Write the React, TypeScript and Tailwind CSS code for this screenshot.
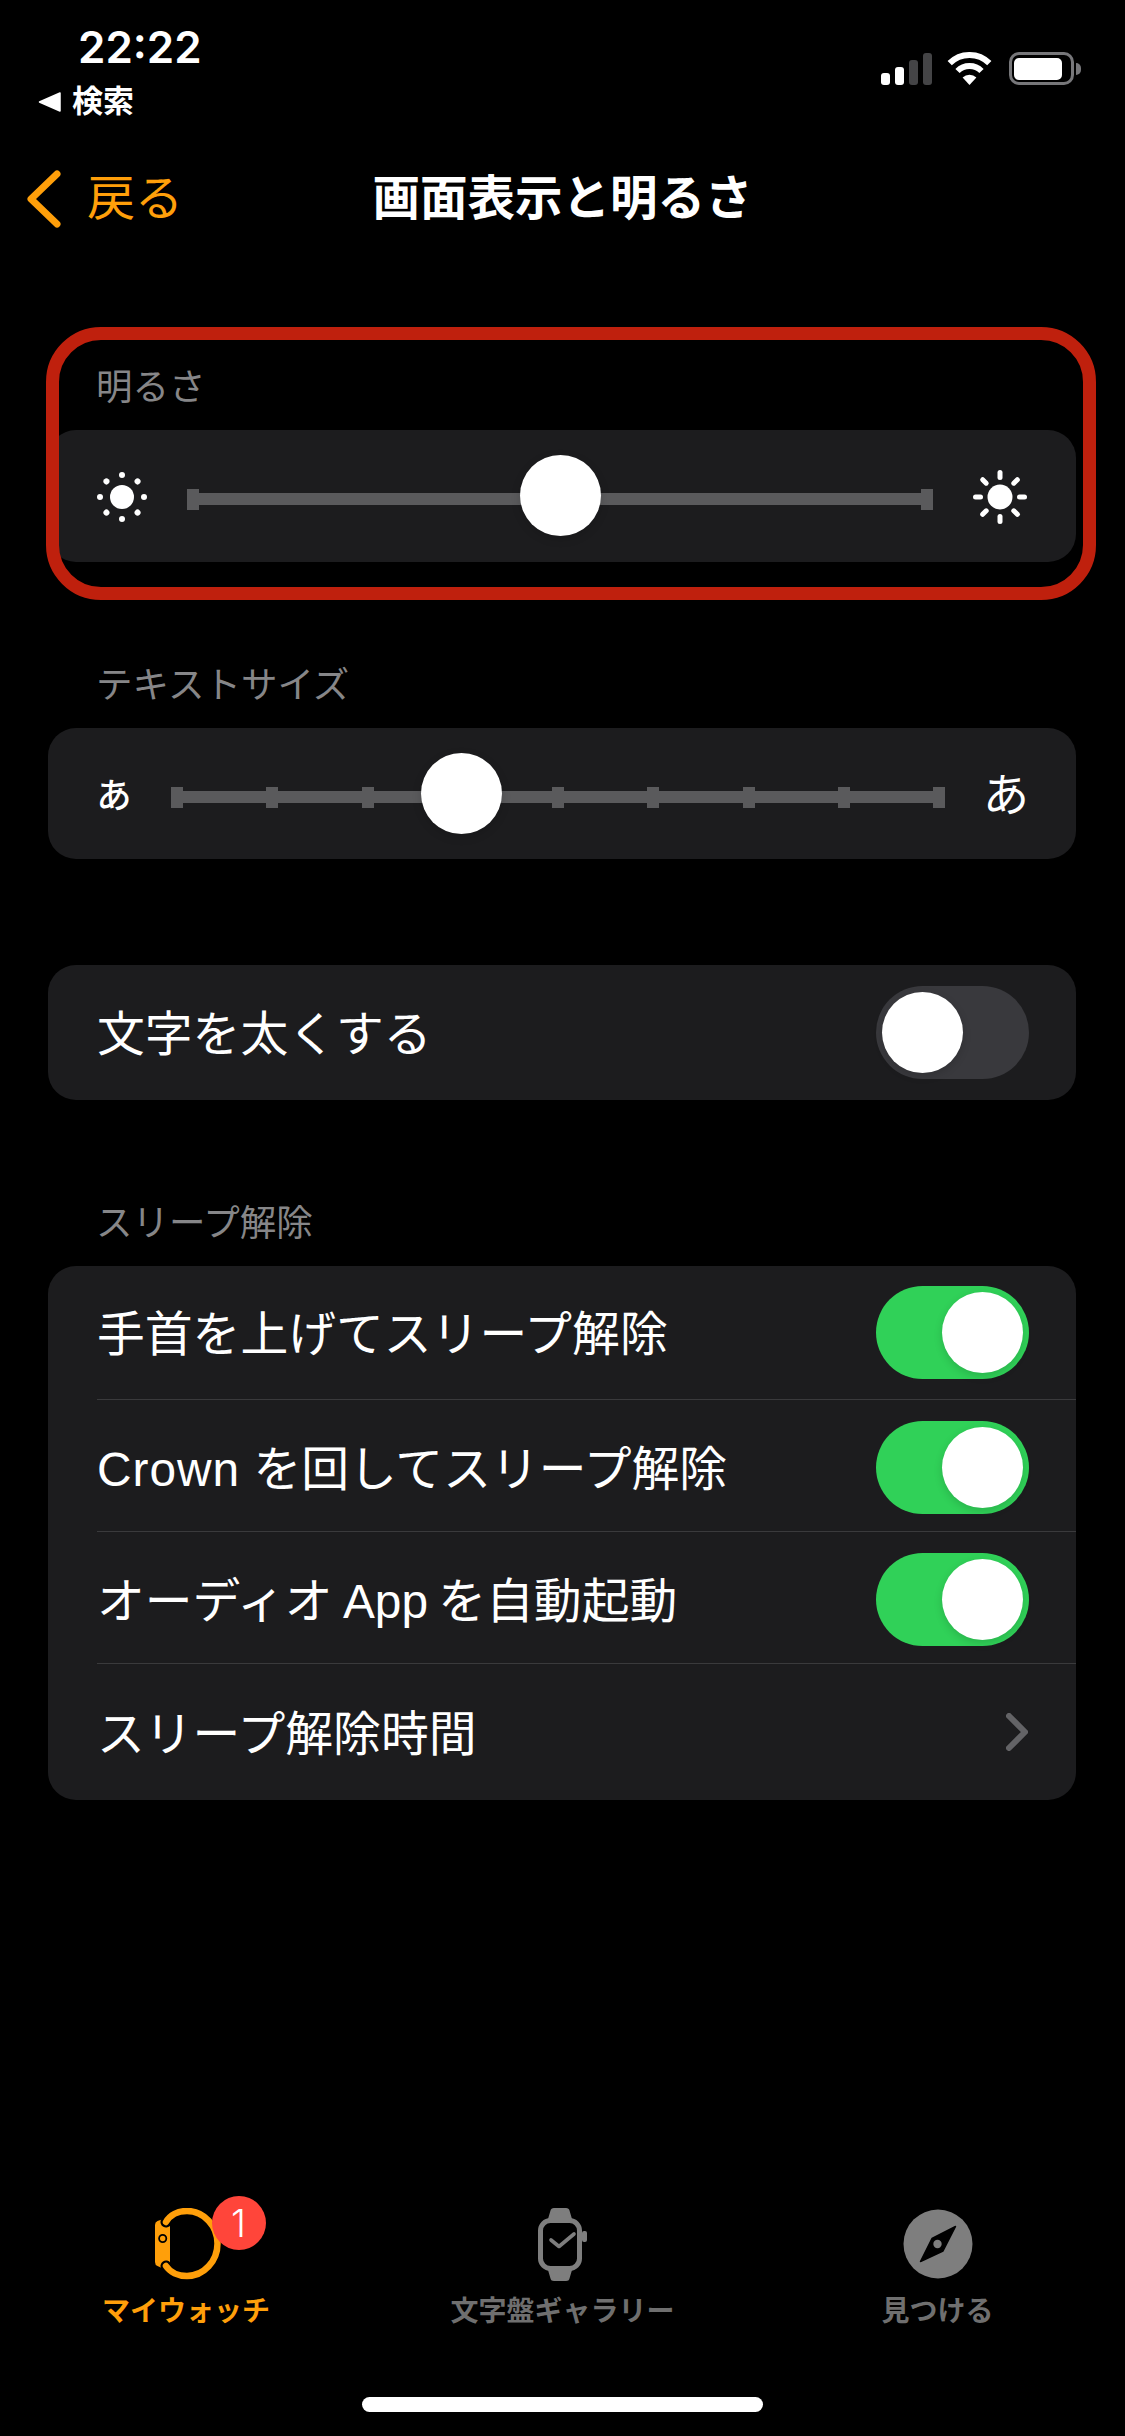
const SLEEP_ROWS = [
  { key: "raise", label: <>手首を上げてスリープ解除</>, rowClass: "h-[134px]", textClass: "" },
  {
    key: "crown",
    label: (
      <>
        <span className="tracking-[1px]">Crown</span> を回してスリープ解除
      </>
    ),
    rowClass: "h-[132px] pt-[3px]",
    textClass: "",
  },
  { key: "audio", label: <>オーディオ App を自動起動</>, rowClass: "h-[132px] pt-[3px]", textClass: "[word-spacing:-3px]" },
];

const RAY_ANGLES = [0, 45, 90, 135, 180, 225, 270, 315];

function SmallSun() {
  return (
    <svg width="50" height="50" viewBox="0 0 50 50" className="shrink-0 mt-[1px]" fill="#fff">
      <circle cx="25" cy="25" r="12" />
      {RAY_ANGLES.map((a) => (
        <circle key={a} cx="25" cy="3" r="3" transform={`rotate(${a} 25 25)`} />
      ))}
    </svg>
  );
}

function LargeSun() {
  return (
    <svg width="54" height="54" viewBox="0 0 54 54" className="shrink-0 mt-[1px]" fill="#fff">
      <circle cx="27" cy="27" r="12.5" />
      {RAY_ANGLES.map((a) => (
        <rect key={a} x="24.5" y="0" width="5" height="10" rx="2.5" transform={`rotate(${a} 27 27)`} />
      ))}
    </svg>
  );
}

function Slider({ percent, ticks }: { percent: number; ticks: number }) {
  return (
    <div className="relative flex-1 h-[21px] mt-[7px] flex items-center justify-between">
      <div className="absolute inset-x-0 top-[4px] h-[12px] bg-[#5a5a5c]" />
      {Array.from({ length: ticks }).map((_, i) => (
        <div key={i} className="relative w-[12px] h-[21px] bg-[#5a5a5c]" />
      ))}
      <div
        className="absolute top-[-34px] w-[81px] h-[81px] -ml-[40px] rounded-full bg-white shadow-[0_3px_10px_rgba(0,0,0,0.15)]"
        style={{ left: `${percent}%` }}
      />
    </div>
  );
}

function Toggle({ on }: { on: boolean }) {
  return (
    <div
      className={`w-[153px] h-[93px] shrink-0 rounded-full flex items-center px-[6px] ${
        on ? "bg-[#30d158] justify-end" : "bg-[#39393d] justify-start"
      }`}
    >
      <div className="w-[81px] h-[81px] rounded-full bg-white shadow-[0_3px_8px_rgba(0,0,0,0.15)]" />
    </div>
  );
}

function SectionLabel({ children }: { children: string }) {
  return (
    <div className="h-[44px] mb-[22px] pl-[48px] text-[36.5px] leading-[47px] text-[#868688]">
      {children}
    </div>
  );
}

function StatusBar() {
  return (
    <div className="h-[149px] flex justify-between">
      <div className="pl-[38px] pt-[24px]">
        <div className="pl-[40px] h-[46px] font-['Inter'] text-[44px] leading-[46px] font-semibold text-white">
          22:22
        </div>
        <div className="mt-[12px] flex items-center gap-[11px] text-white">
          <svg width="23" height="20" viewBox="0 0 23 20" fill="#fff">
            <path d="M22 1 L1.5 10 L22 19 Z" stroke="#fff" strokeWidth="1.5" strokeLinejoin="round" />
          </svg>
          <span className="text-[31px] leading-[40px] font-bold">検索</span>
        </div>
      </div>
      <div className="pt-[53px] pr-[44px] flex items-start">
        <div className="flex items-end gap-[5px] h-[32px]">
          <div className="w-[9px] h-[12px] rounded-[3px] bg-white" />
          <div className="w-[9px] h-[18px] rounded-[3px] bg-white" />
          <div className="w-[9px] h-[25px] rounded-[3px] bg-[#444446]" />
          <div className="w-[9px] h-[32px] rounded-[3px] bg-[#444446]" />
        </div>
        <svg width="45" height="33" viewBox="0 0 45 33" className="ml-[15px] -mt-[1px]" fill="none" stroke="#fff">
          <path d="M2.7 11.2 A28 28 0 0 1 42.3 11.2" strokeWidth="6" />
          <path d="M10.5 19 A17 17 0 0 1 34.5 19" strokeWidth="6" />
          <path d="M22.5 33 L15.6 25.6 A10 10 0 0 1 29.4 25.6 Z" fill="#fff" stroke="none" />
        </svg>
        <div className="ml-[17px] w-[65px] h-[33px] -mt-[1px] rounded-[10px] border-[3px] border-[#77777a] pl-[2px] flex items-center">
          <div className="w-[48px] h-[22px] rounded-[5px] bg-white" />
        </div>
        <div className="ml-[2px] mt-[10px] w-[5px] h-[12px] rounded-r-full bg-[#77777a]" />
      </div>
    </div>
  );
}

function NavBar() {
  return (
    <div className="h-[100px] grid grid-cols-[1fr_auto_1fr] items-center">
      <div className="pl-[27px] flex items-center gap-[26px] text-[#ff9f0a]">
        <svg width="34" height="58" viewBox="0 0 34 58" fill="none" stroke="#ff9f0a" strokeWidth="7" strokeLinecap="round" strokeLinejoin="round">
          <path d="M30 4 L4 29 L30 54" />
        </svg>
        <span className="text-[48px] leading-[60px]">戻る</span>
      </div>
      <div className="text-[47.5px] leading-[60px] font-bold text-white">画面表示と明るさ</div>
      <div />
    </div>
  );
}

function WatchIcon() {
  return (
    <svg width="66" height="72" viewBox="0 0 66 72" fill="none">
      <path d="M2.5 13 L11 10 L15 16 L15 55 L11 62 L2.5 58 Q0 57 0 54 L0 17 Q0 14 2.5 13 Z" fill="#ff9f0a" />
      <path d="M11 14 C15 7 23 3 32 3 C49 3 62.5 18 62.5 35.5 C62.5 53 49 68 32 68 C23 68 15 64 11 58" stroke="#000" strokeWidth="11" strokeLinecap="round" />
      <path d="M11 14 C15 7 23 3 32 3 C49 3 62.5 18 62.5 35.5 C62.5 53 49 68 32 68 C23 68 15 64 11 58" stroke="#ff9f0a" strokeWidth="6.5" strokeLinecap="round" />
      <circle cx="7.7" cy="30.5" r="3.6" fill="#ff9f0a" stroke="#000" strokeWidth="1.8" />
    </svg>
  );
}

function GalleryIcon() {
  return (
    <svg width="49" height="73" viewBox="0 0 49 73" fill="none">
      <path d="M10 11 L12.5 2.5 Q13 0 16 0 L28 0 Q31 0 31.5 2.5 L34 11 Z" fill="#7e7e7e" />
      <path d="M10 62 L12.5 70.5 Q13 73 16 73 L28 73 Q31 73 31.5 70.5 L34 62 Z" fill="#7e7e7e" />
      <rect x="2.5" y="12.5" width="39" height="48" rx="10" stroke="#7e7e7e" strokeWidth="5" />
      <rect x="44" y="23" width="5" height="11" rx="2" fill="#7e7e7e" />
      <path d="M13 32 L21 38.5 L36 26" stroke="#7e7e7e" strokeWidth="3.6" strokeLinecap="round" strokeLinejoin="round" />
    </svg>
  );
}

function CompassIcon() {
  return (
    <svg width="70" height="70" viewBox="0 0 70 70">
      <circle cx="35" cy="35" r="34.5" fill="#7e7e7e" />
      <path d="M52.5 17.5 L40 42 L17.5 52.5 L29 29.5 Z" fill="#000" stroke="#000" strokeWidth="1.5" strokeLinejoin="round" />
      <circle cx="34.5" cy="35" r="4.2" fill="#7e7e7e" />
    </svg>
  );
}

function TabItem({ icon, label, active }: { icon: React.ReactNode; label: string; active?: boolean }) {
  return (
    <div className="flex flex-col items-center">
      <div className="h-[74px] flex items-center justify-center">{icon}</div>
      <div className={`mt-[10px] text-[28px] leading-[42px] font-bold whitespace-nowrap ${active ? "text-[#ff9f0a] -ml-[3px]" : "text-[#6f6f6f]"}`}>
        {label}
      </div>
    </div>
  );
}

export default function App() {
  return (
    <div className="w-[1125px] h-[2436px] bg-black flex flex-col overflow-hidden font-['Liberation_Sans','Noto_Sans_CJK_JP',sans-serif]">
      <StatusBar />
      <NavBar />

      <main className="pl-[48px] pr-[49px] pt-[115px] text-white">
        <section className="relative">
          <SectionLabel>明るさ</SectionLabel>
          <div className="h-[132px] rounded-[28px] bg-[#1c1c1e] px-[49px] flex items-center gap-[40px]">
            <SmallSun />
            <Slider percent={50} ticks={2} />
            <LargeSun />
          </div>
          {/* red annotation drawn on top of the screenshot */}
          <div className="absolute left-[-2px] right-[-20px] top-[-37px] bottom-[-38px] rounded-[55px] border-[13px] border-[#bf200d] pointer-events-none" />
        </section>

        <section className="mt-[100px]">
          <SectionLabel>テキストサイズ</SectionLabel>
          <div className="h-[131px] rounded-[28px] bg-[#1c1c1e] px-[49px] flex items-center gap-[40px]">
            <span className="w-[34px] mt-[4px] shrink-0 text-[35px] leading-none font-medium flex justify-center">あ</span>
            <Slider percent={37.5} ticks={9} />
            <span className="w-[42px] mt-[2px] shrink-0 text-[46px] leading-none flex justify-center">あ</span>
          </div>
        </section>

        <section className="mt-[106px] h-[135px] rounded-[28px] bg-[#1c1c1e] pl-[49px] pr-[47px] flex items-center justify-between">
          <span className="mt-[5px] text-[47.8px] leading-[60px]">文字を太くする</span>
          <Toggle on={false} />
        </section>

        <section className="mt-[100px]">
          <SectionLabel>スリープ解除</SectionLabel>
          <div className="rounded-[28px] bg-[#1c1c1e] pl-[49px]">
            {SLEEP_ROWS.map((row) => (
              <div
                key={row.key}
                className={`${row.rowClass} pr-[47px] border-b border-[#3a3a3c] flex items-center justify-between`}
              >
                <span className={`mt-[5px] text-[47.8px] leading-[60px] ${row.textClass}`}>{row.label}</span>
                <Toggle on />
              </div>
            ))}
            <div className="h-[136px] pr-[48px] flex items-center justify-between">
              <span className="mt-[5px] text-[47.8px] leading-[60px]">スリープ解除時間</span>
              <svg width="22" height="38" viewBox="0 0 22 38" fill="none" stroke="#636366" strokeWidth="6" strokeLinecap="round" strokeLinejoin="round">
                <path d="M3 3 L19 19 L3 35" />
              </svg>
            </div>
          </div>
        </section>
      </main>

      <div className="mt-auto">
        <nav className="grid grid-cols-3">
          <TabItem
            active
            label="マイウォッチ"
            icon={
              <div className="relative">
                <WatchIcon />
                <div className="absolute left-[57px] top-[-12px] w-[54px] h-[54px] rounded-full bg-[#ff453a] flex items-center justify-center font-['Inter'] font-light text-[38px] leading-none text-white">
                  1
                </div>
              </div>
            }
          />
          <TabItem label="文字盤ギャラリー" icon={<GalleryIcon />} />
          <TabItem label="見つける" icon={<CompassIcon />} />
        </nav>
        <div className="mt-[64px] mb-[24px] mx-auto w-[401px] h-[15px] rounded-full bg-white" />
      </div>
    </div>
  );
}
